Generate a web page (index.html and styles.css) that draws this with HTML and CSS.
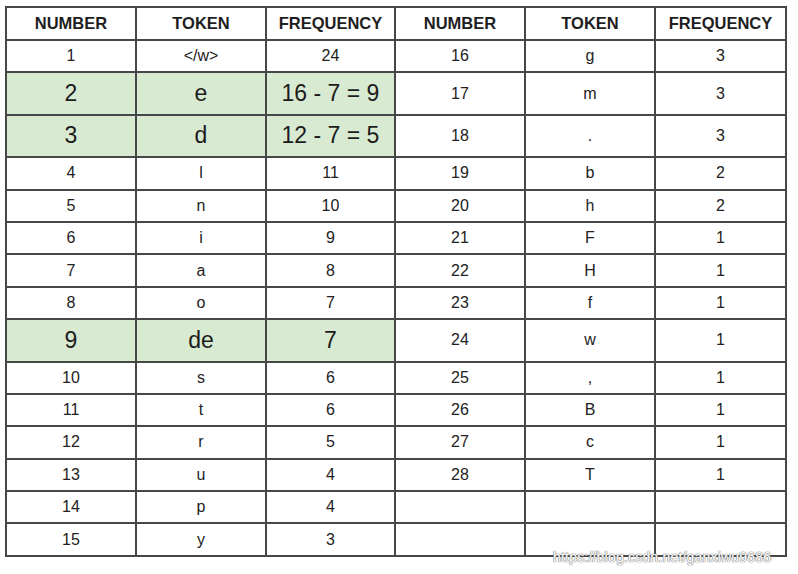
FILE: index.html
```html
<!DOCTYPE html>
<html>
<head>
<meta charset="utf-8">
<link rel="stylesheet" href="styles.css">
</head>
<body>
<div class="page">
<table class="freq">
  <colgroup>
    <col class="c1"><col class="c2"><col class="c3"><col class="c4"><col class="c5"><col class="c6">
  </colgroup>
  <thead>
    <tr><th>NUMBER</th><th>TOKEN</th><th>FREQUENCY</th><th>NUMBER</th><th>TOKEN</th><th>FREQUENCY</th></tr>
  </thead>
  <tbody>
    <tr><td>1</td><td>&lt;/w&gt;</td><td>24</td><td>16</td><td>g</td><td>3</td></tr>
    <tr class="tall"><td class="hl">2</td><td class="hl">e</td><td class="hl">16 - 7 = 9</td><td>17</td><td>m</td><td>3</td></tr>
    <tr class="tall"><td class="hl">3</td><td class="hl">d</td><td class="hl">12 - 7 = 5</td><td>18</td><td>.</td><td>3</td></tr>
    <tr><td>4</td><td>l</td><td>11</td><td>19</td><td>b</td><td>2</td></tr>
    <tr><td>5</td><td>n</td><td>10</td><td>20</td><td>h</td><td>2</td></tr>
    <tr><td>6</td><td>i</td><td>9</td><td>21</td><td>F</td><td>1</td></tr>
    <tr><td>7</td><td>a</td><td>8</td><td>22</td><td>H</td><td>1</td></tr>
    <tr><td>8</td><td>o</td><td>7</td><td>23</td><td>f</td><td>1</td></tr>
    <tr class="tall"><td class="hl">9</td><td class="hl">de</td><td class="hl">7</td><td>24</td><td>w</td><td>1</td></tr>
    <tr><td>10</td><td>s</td><td>6</td><td>25</td><td>,</td><td>1</td></tr>
    <tr><td>11</td><td>t</td><td>6</td><td>26</td><td>B</td><td>1</td></tr>
    <tr><td>12</td><td>r</td><td>5</td><td>27</td><td>c</td><td>1</td></tr>
    <tr><td>13</td><td>u</td><td>4</td><td>28</td><td>T</td><td>1</td></tr>
    <tr><td>14</td><td>p</td><td>4</td><td></td><td></td><td></td></tr>
    <tr><td>15</td><td>y</td><td>3</td><td></td><td></td><td></td></tr>
  </tbody>
</table>
<div class="watermark">https://blog.csdn.net/ganxiwu9686</div>
</div>
</body>
</html>
```

FILE: styles.css
```css
html, body {
  margin: 0;
  padding: 0;
  background: #ffffff;
}

.page {
  position: relative;
  width: 798px;
  height: 574px;
  padding: 6px 0 0 5px;
  box-sizing: border-box;
  font-family: "Liberation Sans", Arial, sans-serif;
  color: #222222;
}

.freq {
  border-collapse: collapse;
  table-layout: fixed;
  width: 781px;
}

.freq col { width: 130px; }
.freq col.c3 { width: 129px; }
.freq col.c6 { width: 131px; }

.freq th,
.freq td {
  border: 2px solid #474747;
  text-align: center;
  vertical-align: middle;
  padding: 0;
  height: 32.4px;
  box-sizing: border-box;
}

.freq th {
  font-size: 16.5px;
  font-weight: bold;
  color: #1e1e1e;
  height: 33px;
}

.freq td {
  font-size: 16px;
}

.freq tr.tall td {
  height: 42.4px;
}

.freq td.hl {
  background: #d9ead3;
  font-size: 23px;
  color: #1c1c1c;
}

.watermark {
  position: absolute;
  left: 553px;
  top: 549px;
  font-family: "Liberation Sans", Arial, sans-serif;
  font-size: 14px;
  color: #ffffff;
  letter-spacing: 0.2px;
  text-shadow: 0 0 1px #7a7a7a, 0 0 1px #7a7a7a, 0 0 1px #7a7a7a;
}
```
